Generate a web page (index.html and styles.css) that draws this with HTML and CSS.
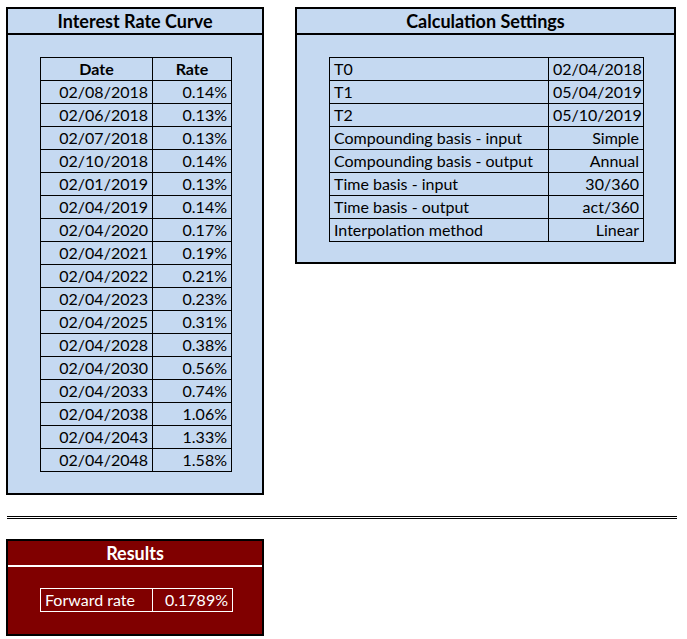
FILE: index.html
```html
<!DOCTYPE html>
<html>
<head>
<meta charset="utf-8">
<link rel="stylesheet" href="styles.css">
</head>
<body>
<div class="top">
  <section class="panel panel-curve">
    <h2 class="panel-title">Interest Rate Curve</h2>
    <div class="panel-body">
      <table class="grid curve">
        <colgroup><col class="c-date"><col class="c-rate"></colgroup>
        <tr class="head"><th>Date</th><th>Rate</th></tr>
        <tr><td>02/08/2018</td><td>0.14%</td></tr>
        <tr><td>02/06/2018</td><td>0.13%</td></tr>
        <tr><td>02/07/2018</td><td>0.13%</td></tr>
        <tr><td>02/10/2018</td><td>0.14%</td></tr>
        <tr><td>02/01/2019</td><td>0.13%</td></tr>
        <tr><td>02/04/2019</td><td>0.14%</td></tr>
        <tr><td>02/04/2020</td><td>0.17%</td></tr>
        <tr><td>02/04/2021</td><td>0.19%</td></tr>
        <tr><td>02/04/2022</td><td>0.21%</td></tr>
        <tr><td>02/04/2023</td><td>0.23%</td></tr>
        <tr><td>02/04/2025</td><td>0.31%</td></tr>
        <tr><td>02/04/2028</td><td>0.38%</td></tr>
        <tr><td>02/04/2030</td><td>0.56%</td></tr>
        <tr><td>02/04/2033</td><td>0.74%</td></tr>
        <tr><td>02/04/2038</td><td>1.06%</td></tr>
        <tr><td>02/04/2043</td><td>1.33%</td></tr>
        <tr><td>02/04/2048</td><td>1.58%</td></tr>
      </table>
    </div>
  </section>
  <section class="panel panel-settings">
    <h2 class="panel-title">Calculation Settings</h2>
    <div class="panel-body">
      <table class="grid settings">
        <colgroup><col class="c-label"><col class="c-value"></colgroup>
        <tr><td>T0</td><td>02/04/2018</td></tr>
        <tr><td>T1</td><td>05/04/2019</td></tr>
        <tr><td>T2</td><td>05/10/2019</td></tr>
        <tr><td>Compounding basis - input</td><td>Simple</td></tr>
        <tr><td>Compounding basis - output</td><td>Annual</td></tr>
        <tr><td>Time basis - input</td><td>30/360</td></tr>
        <tr><td>Time basis - output</td><td>act/360</td></tr>
        <tr><td>Interpolation method</td><td>Linear</td></tr>
      </table>
    </div>
  </section>
</div>
<div class="double-rule"></div>
<section class="results">
  <h2 class="results-title">Results</h2>
  <div class="results-body">
    <table class="grid result-table">
      <colgroup><col class="c-rlabel"><col class="c-rvalue"></colgroup>
      <tr><td>Forward rate</td><td>0.1789%</td></tr>
    </table>
  </div>
</section>
</body>
</html>
```

FILE: styles.css
```css
* { box-sizing: border-box; }
html, body { margin: 0; padding: 0; background: #ffffff; }
body {
  font-family: Lato, "Open Sans", sans-serif;
  font-size: 16px;
  color: #000000;
}
.top {
  display: flex;
  align-items: flex-start;
  gap: 31px;
  padding: 7px 0 0 6px;
}
.panel {
  background: #c5d9f1;
  border: 2px solid #000000;
}
.panel-curve { width: 258px; height: 488px; }
.panel-settings { width: 381px; height: 257px; }
.panel-title {
  margin: 0;
  height: 26px;
  line-height: 24px;
  border-bottom: 2px solid #000000;
  text-align: center;
  font-size: 18px;
  font-weight: 700;
}
.panel-body {
  padding: 22px 31px 0 32px;
}
.grid {
  border-collapse: collapse;
  table-layout: fixed;
  width: 100%;
}
.grid td, .grid th {
  border: 1px solid #000000;
  height: 23px;
  padding: 0 4px 0 4px;
  line-height: 20px;
  white-space: nowrap;
  overflow: hidden;
}
.grid th { font-weight: 700; text-align: center; }
.curve td { text-align: right; }
.c-date { width: 112px; }
.c-rate { width: 79px; }
.settings td:first-child { text-align: left; }
.settings td:last-child { text-align: right; }
.c-label { width: 219px; }
.c-value { width: 95px; }
.double-rule {
  margin: 21px 0 0 7px;
  width: 670px;
  height: 3px;
  border-top: 1px solid #000000;
  border-bottom: 1px solid #000000;
}
.results {
  margin: 20px 0 0 6px;
  width: 258px;
  height: 97px;
  background: #800000;
  border: 2px solid #000000;
  color: #ffffff;
}
.results-title {
  margin: 0;
  height: 26px;
  line-height: 24px;
  border-bottom: 2px solid #ffffff;
  text-align: center;
  font-size: 18px;
  font-weight: 700;
}
.results-body { padding: 21px 30px 0 32px; }
.result-table td { border-color: #ffffff; }
.result-table td:first-child { text-align: left; }
.result-table td:last-child { text-align: right; }
.c-rlabel { width: 112px; }
.c-rvalue { width: 80px; }
```
